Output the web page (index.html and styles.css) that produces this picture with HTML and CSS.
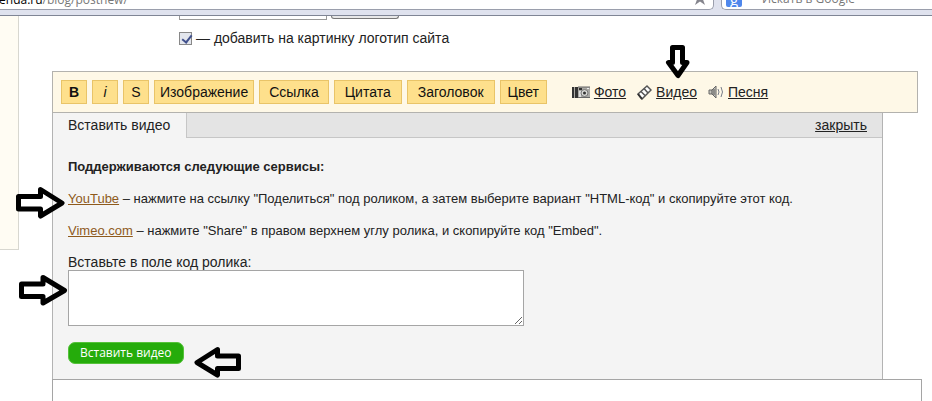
FILE: index.html
```html
<!DOCTYPE html>
<html lang="ru">
<head>
<meta charset="utf-8">
<title>Вставить видео</title>
<link rel="stylesheet" href="styles.css">
</head>
<body>
<header class="browser">
  <div class="address"><span class="url"><b>lenda.ru</b>/blog/postnew/</span>
    <svg class="star" width="14" height="14" viewBox="0 0 14 14"><path d="M7 0l2 5h5l-4 3.500 2 5.500-5-3.500L2 14l2-5.500L0 5h5z" fill="#85858d"/></svg>
  </div>
  <div class="search"><span class="google">g</span><span class="caret"></span><span class="hint">Искать в Google</span></div>
</header>
<div class="page">
  <aside class="sidebar"></aside>
  <main class="main">
    <form class="upload">
      <div class="file"><span class="file-box"></span><span class="file-button"></span></div>
      <label class="check"><input type="checkbox" checked><span>— добавить на картинку логотип сайта</span></label>
    </form>
    <div class="toolbar">
      <button class="tool square"><b>B</b></button>
      <button class="tool square"><i>i</i></button>
      <button class="tool square">S</button>
      <button class="tool image">Изображение</button>
      <button class="tool">Ссылка</button>
      <button class="tool wide">Цитата</button>
      <button class="tool wide">Заголовок</button>
      <button class="tool color">Цвет</button>
      <nav class="media">
        <a href="#photo"><svg width="18" height="14" viewBox="0 0 18 14"><path d="M0 2h18v11H0z" fill="#aaa9a4"/><path d="M0 2h2v11H0zM3 2h3v11H3z" fill="#333"/><path d="M6 2h12M6 12.500h12" stroke="#666"/><path d="M7 3h3v2H7z" fill="#333"/><path d="M7 6h2v6H7z" fill="#ddd"/><circle cx="12.500" cy="8" r="3.500" fill="#d8d8d4" stroke="#777"/><circle cx="12.500" cy="8" r="1.500" fill="#333"/><path d="M15 3h2v1h-2z" fill="#eee"/></svg><span>Фото</span></a>
        <a href="#video"><svg width="15" height="16" viewBox="0 0 15 16"><path d="M1 10L10 2l4 4-9 9z" fill="#fff" stroke="#555" stroke-width="1.500"/><path d="M4 7.500l4 4M7 4.500l4 4.500" stroke="#555" stroke-width="1.500" fill="none"/><path d="M1 10l4 5" stroke="#333" stroke-width="2"/></svg><span>Видео</span></a>
        <a href="#song"><svg width="16" height="14" viewBox="0 0 16 14"><path d="M1 5h3l4-4v12L4 9H1z" fill="#c4c4bd" stroke="#666"/><path d="M4 5v4M6 4v6" stroke="#555"/><path d="M10 4q2 3 0 6M13 2q3 5 0 10" fill="none" stroke="#777c88"/></svg><span>Песня</span></a>
      </nav>
    </div>
    <section class="panel">
      <div class="tabs"><span class="tab">Вставить видео</span><a class="close" href="#close">закрыть</a></div>
      <form class="content">
        <h2>Поддерживаются следующие сервисы:</h2>
        <p><a href="#youtube">YouTube</a> – нажмите на ссылку "Поделиться" под роликом, а затем выберите вариант "HTML-код" и скопируйте этот код.</p>
        <p><a href="#vimeo">Vimeo.com</a> – нажмите "Share" в правом верхнем углу ролика, и скопируйте код "Embed".</p>
        <label class="code-label" for="code">Вставьте в поле код ролика:</label>
        <textarea class="code" id="code"></textarea>
        <button class="submit" type="button">Вставить видео</button>
      </form>
    </section>
    <textarea class="post" aria-label="Текст"></textarea>
  </main>
</div>
<svg class="arrows" width="700" height="390" viewBox="0 0 700 390">
  <path d="M672.500 47.500H682.500V62.500H687L678 75.500L668.500 62.500H672.500Z"/>
  <path d="M18.500 196.500H40.500V189.500L62 203L40.500 216V209H18.500Z"/>
  <path d="M21.500 284H43V277.500L64.500 290.500L43 303V296.500H21.500Z"/>
  <path d="M238.500 356H217.500V349.500L197 362.500L217.500 375V368.500H238.500Z"/>
</svg>
</body>
</html>
```
FILE: styles.css
```css
* { box-sizing: border-box; }
body {
  display: flex;
  flex-direction: column;
  margin: 0;
  height: 100vh;
  overflow: hidden;
  position: relative;
  background: #fff;
  color: #222;
  font: 14px/18px "Liberation Sans", Arial, sans-serif;
}
button, textarea { font: inherit; margin: 0; }

.browser {
  display: flex;
  flex: none;
  gap: 7px;
  height: 16px;
  padding-bottom: 5px;
  background: #dfe2ee;
  border-bottom: 1px solid #7f8595;
  font: 12px/16px "Open Sans", sans-serif;
  color: #777;
}
.address, .search {
  display: flex;
  align-items: flex-end;
  height: 10px;
  background: #fff;
  border: 1px solid #9a9eac;
  border-top: 0;
  overflow: hidden;
}
.address { flex: 1; justify-content: space-between; border-left: 0; border-radius: 0 0 5px 0; padding: 0 6px 1px 0; }
.url { margin-left: -4px; }
.star { margin-bottom: 3px; }
.address b { color: #000; font-weight: 400; }
.search { width: 211px; border-right: 0; border-radius: 0 0 0 5px; padding: 0 4px 2px; }
.google { width: 16px; height: 16px; background: #4f87ec; color: #fff; text-align: center; line-height: 16px; border-radius: 2px; font-size: 15px; }
.caret { width: 20px; }

.page { display: flex; flex: 1; min-height: 0; align-items: stretch; }
.sidebar { width: 19px; height: 234px; background: #fffcf3; border: solid #d8d7d0; border-width: 0 1px 1px 0; }
.main { flex: 1; display: flex; flex-direction: column; margin-left: 33px; }
.upload { padding-left: 127px; height: 55px; }
.file { display: flex; gap: 4px; height: 4px; }
.file-box { width: 148px; height: 4px; border: 1px solid #999; border-top: 0; }
.file-button { width: 68px; height: 3px; background: #e8e8e8; border: 1px solid #777; border-top: 0; border-radius: 0 0 3px 3px; }
.check { display: inline-flex; align-items: center; gap: 4px; margin-top: 9px; }
.check input { appearance: none; width: 13px; height: 13px; margin: 0; border: 1px solid #888; background: #e3e6ed; position: relative; }
.check input::after { content: ""; position: absolute; left: 4px; top: 0; width: 4px; height: 8px; border: solid #40508c; border-width: 0 2px 2px 0; transform: rotate(38deg); }

.toolbar {
  display: flex;
  align-items: center;
  gap: 5px;
  height: 42px;
  margin-right: 14px;
  padding: 0 8px;
  background: #fef8e7;
  border: 1px solid #b3b2ae;
}
.tool { height: 24px; padding: 0 9px; border: 1px solid #e9c468; background: #fee08c; color: #111; line-height: 22px; }
.tool.square { width: 26px; padding: 0; }
.tool.image { padding: 0 5px; }
.tool.wide { padding: 0 10px; }
.tool.color { padding: 0 7px; }
.media { display: flex; gap: 11px; margin-left: 20px; }
.media a { display: flex; align-items: center; gap: 4px; color: #222; }

.panel { margin-right: 49px; background: #f4f4f4; border: solid #b3b3b3; border-width: 0 1px; }
.tabs { display: flex; height: 25px; background: #e4e4e4; line-height: 25px; justify-content: space-between; border-bottom: 1px solid #c6c6c6; }
.tab { height: 25px; padding: 0 16px 0 15px; background: #f4f4f4; border-right: 1px solid #c6c6c6; }
.close { color: #222; margin-right: 15px; }
.content { display: flex; flex-direction: column; align-items: flex-start; padding: 20px 15px 15px; }
.content h2, .content p { margin: 0 0 14px; font-size: 13px; line-height: 18px; }
.content p a { color: #8e5a1c; }
.code-label { line-height: 16px; }
.code { width: 456px; height: 56px; border: 1px solid #a5a5a5; background: #fff; margin-bottom: 16px; resize: both; }
.submit { height: 22px; padding: 0 11px; border: 1px solid #55c23a; border-radius: 7px; background: #25ac0b; color: #fff; font: 12px/18px "Open Sans", sans-serif; }
.post { display: block; flex: 1; min-height: 0; width: calc(100% - 10px); border: 1px solid #a5a5a5; border-bottom: 0; resize: none; }

.arrows { position: absolute; left: 0; top: 0; pointer-events: none; }
.arrows path { fill: none; stroke: #000; stroke-width: 5; stroke-linejoin: round; }
```
